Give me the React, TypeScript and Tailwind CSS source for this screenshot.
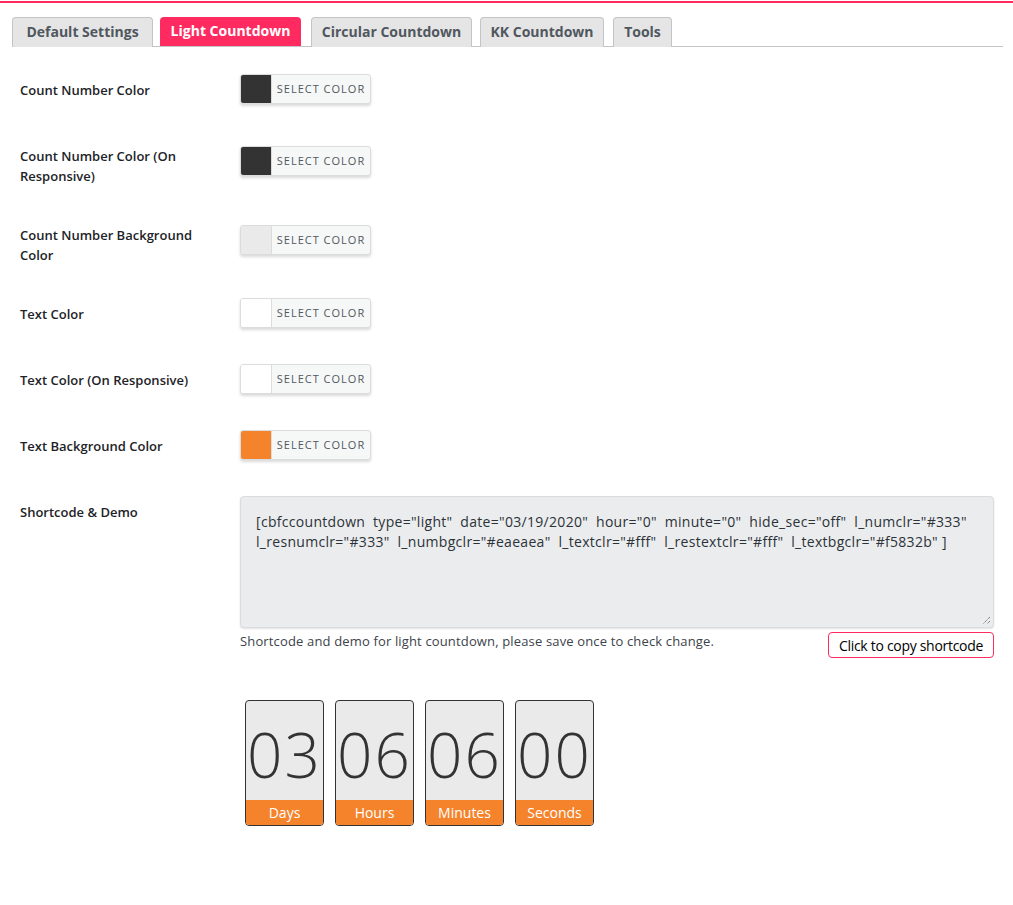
import React from 'react';

const FONT = { fontFamily: '"Open Sans", "Noto Sans", sans-serif' };

// tab label, width, left gap
const tabs: { t: string; w: string; ml: string }[] = [
  { t: 'Default Settings', w: 'w-[141px]', ml: 'ml-0' },
  { t: 'Light Countdown', w: 'w-[141px]', ml: 'ml-[7px]' },
  { t: 'Circular Countdown', w: 'w-[161px]', ml: 'ml-[10px]' },
  { t: 'KK Countdown', w: 'w-[124px]', ml: 'ml-[8px]' },
  { t: 'Tools', w: 'w-[59px]', ml: 'ml-[9px]' },
];

// label, swatch colour, row height, two-line label
const rows: { label: string; color: string; h: string; two?: boolean }[] = [
  { label: 'Count Number Color', color: '#333333', h: 'h-[72px]' },
  { label: 'Count Number Color (On Responsive)', color: '#333333', h: 'h-[79px]', two: true },
  { label: 'Count Number Background Color', color: '#eaeaea', h: 'h-[73px]', two: true },
  { label: 'Text Color', color: '#ffffff', h: 'h-[66px]' },
  { label: 'Text Color (On Responsive)', color: '#ffffff', h: 'h-[66px]' },
  { label: 'Text Background Color', color: '#f5832b', h: 'h-[66px]' },
];

const units = [
  { n: '03', l: 'Days' },
  { n: '06', l: 'Hours' },
  { n: '06', l: 'Minutes' },
  { n: '00', l: 'Seconds' },
];

function ColorButton({ color }: { color: string }) {
  return (
    <div className="flex h-[30px] w-[131px] overflow-hidden rounded-[3px] border border-[#dcdcde] bg-[#f6f7f7] shadow-[0_2px_3px_rgba(0,0,0,0.15)]">
      <div className="h-full w-[31px] border-r border-[#dcdcde]" style={{ background: color }} />
      <div className="flex flex-1 items-center justify-center text-[11px] tracking-[1px] text-[#50575e]">
        SELECT COLOR
      </div>
    </div>
  );
}

export default function App() {
  return (
    <div className="min-h-[905px] w-[1013px] bg-white text-[#1d2327]" style={FONT}>
      <div className="mt-[1px] h-[3px] border-t-2 border-[#ff2a5f]" />
      {/* tabs */}
      <div className="ml-[12px] mr-[10px] mt-[13px] flex border-b border-[#c3c4c7]">
        {tabs.map((t, i) => (
          <div
            key={t.t}
            className={`${t.w} ${t.ml} ${
              i === 1
                ? 'h-[29px] rounded-t-[4px] bg-[#ff2a5f] pt-[5px] text-center text-[14px] font-bold leading-[18px] text-white'
                : 'mb-[-1px] h-[30px] rounded-t-[4px] border border-b-0 border-[#c3c4c7] bg-[#e5e5e5] pt-[5px] text-center text-[14px] font-bold leading-[18px] text-[#50575e]'
            }`}
          >
            {t.t}
          </div>
        ))}
      </div>

      {/* settings */}
      <div className="mt-[27px] pl-[20px]">
        {rows.map((r) => (
          <div key={r.label} className={`flex items-start ${r.h}`}>
            <div
              className={`w-[220px] pr-[20px] text-[13px] font-semibold leading-[20px] ${r.two ? 'pt-0' : 'pt-[6px]'}`}
            >
              {r.label}
            </div>
            <ColorButton color={r.color} />
          </div>
        ))}

        {/* shortcode */}
        <div className="flex items-start">
          <div className="w-[220px] pt-[6px] text-[13px] font-semibold leading-[20px]">Shortcode &amp; Demo</div>
          <div className="w-[754px]">
            <div className="relative h-[132px] rounded-[4px] border border-[#dcdcde] bg-[#ebecee] px-[15px] pt-[15px] text-[14px] leading-[20px] tracking-[0.3px] text-[#2c3338] shadow-[0_1px_2px_rgba(0,0,0,0.12)]">
              <div className="whitespace-pre">
                {'[cbfccountdown  type="light"  date="03/19/2020"  hour="0"  minute="0"  hide_sec="off"  l_numclr="#333"'}
              </div>
              <div className="whitespace-pre">
                {'l_resnumclr="#333"  l_numbgclr="#eaeaea"  l_textclr="#fff"  l_restextclr="#fff"  l_textbgclr="#f5832b" ]'}
              </div>
              <svg className="absolute bottom-[2px] right-[2px]" width="9" height="9" viewBox="0 0 9 9">
                <path d="M8 1 L1 8 M8 5 L5 8" stroke="#555" strokeWidth="1" strokeDasharray="1 1" />
              </svg>
            </div>
            <div className="mt-[3px] flex items-start justify-between">
              <div className="text-[13px] leading-[20px] tracking-[0.15px] text-[#3c434a]">
                Shortcode and demo for light countdown, please save once to check change.
              </div>
              <div className="mt-[1px] flex h-[26px] items-center rounded-[4px] border border-[#ff2a5f] px-[10px] text-[14px] tracking-[-0.3px] text-black">
                Click to copy shortcode
              </div>
            </div>

            {/* demo */}
            <div className="ml-[5px] mt-[42px] flex gap-[11px]">
              {units.map((u, i) => (
                <div
                  key={i}
                  className="flex h-[126px] w-[79px] flex-col overflow-hidden rounded-[4px] border border-[#333] bg-[#eaeaea]"
                >
                  <div className="flex flex-1 items-center justify-center pt-[6px] text-[62px] font-light leading-none tracking-[2px] text-[#333]">
                    {u.n}
                  </div>
                  <div className="flex h-[25px] items-center justify-center bg-[#f5832b] text-[14px] text-white">
                    {u.l}
                  </div>
                </div>
              ))}
            </div>
          </div>
        </div>
      </div>
    </div>
  );
}
